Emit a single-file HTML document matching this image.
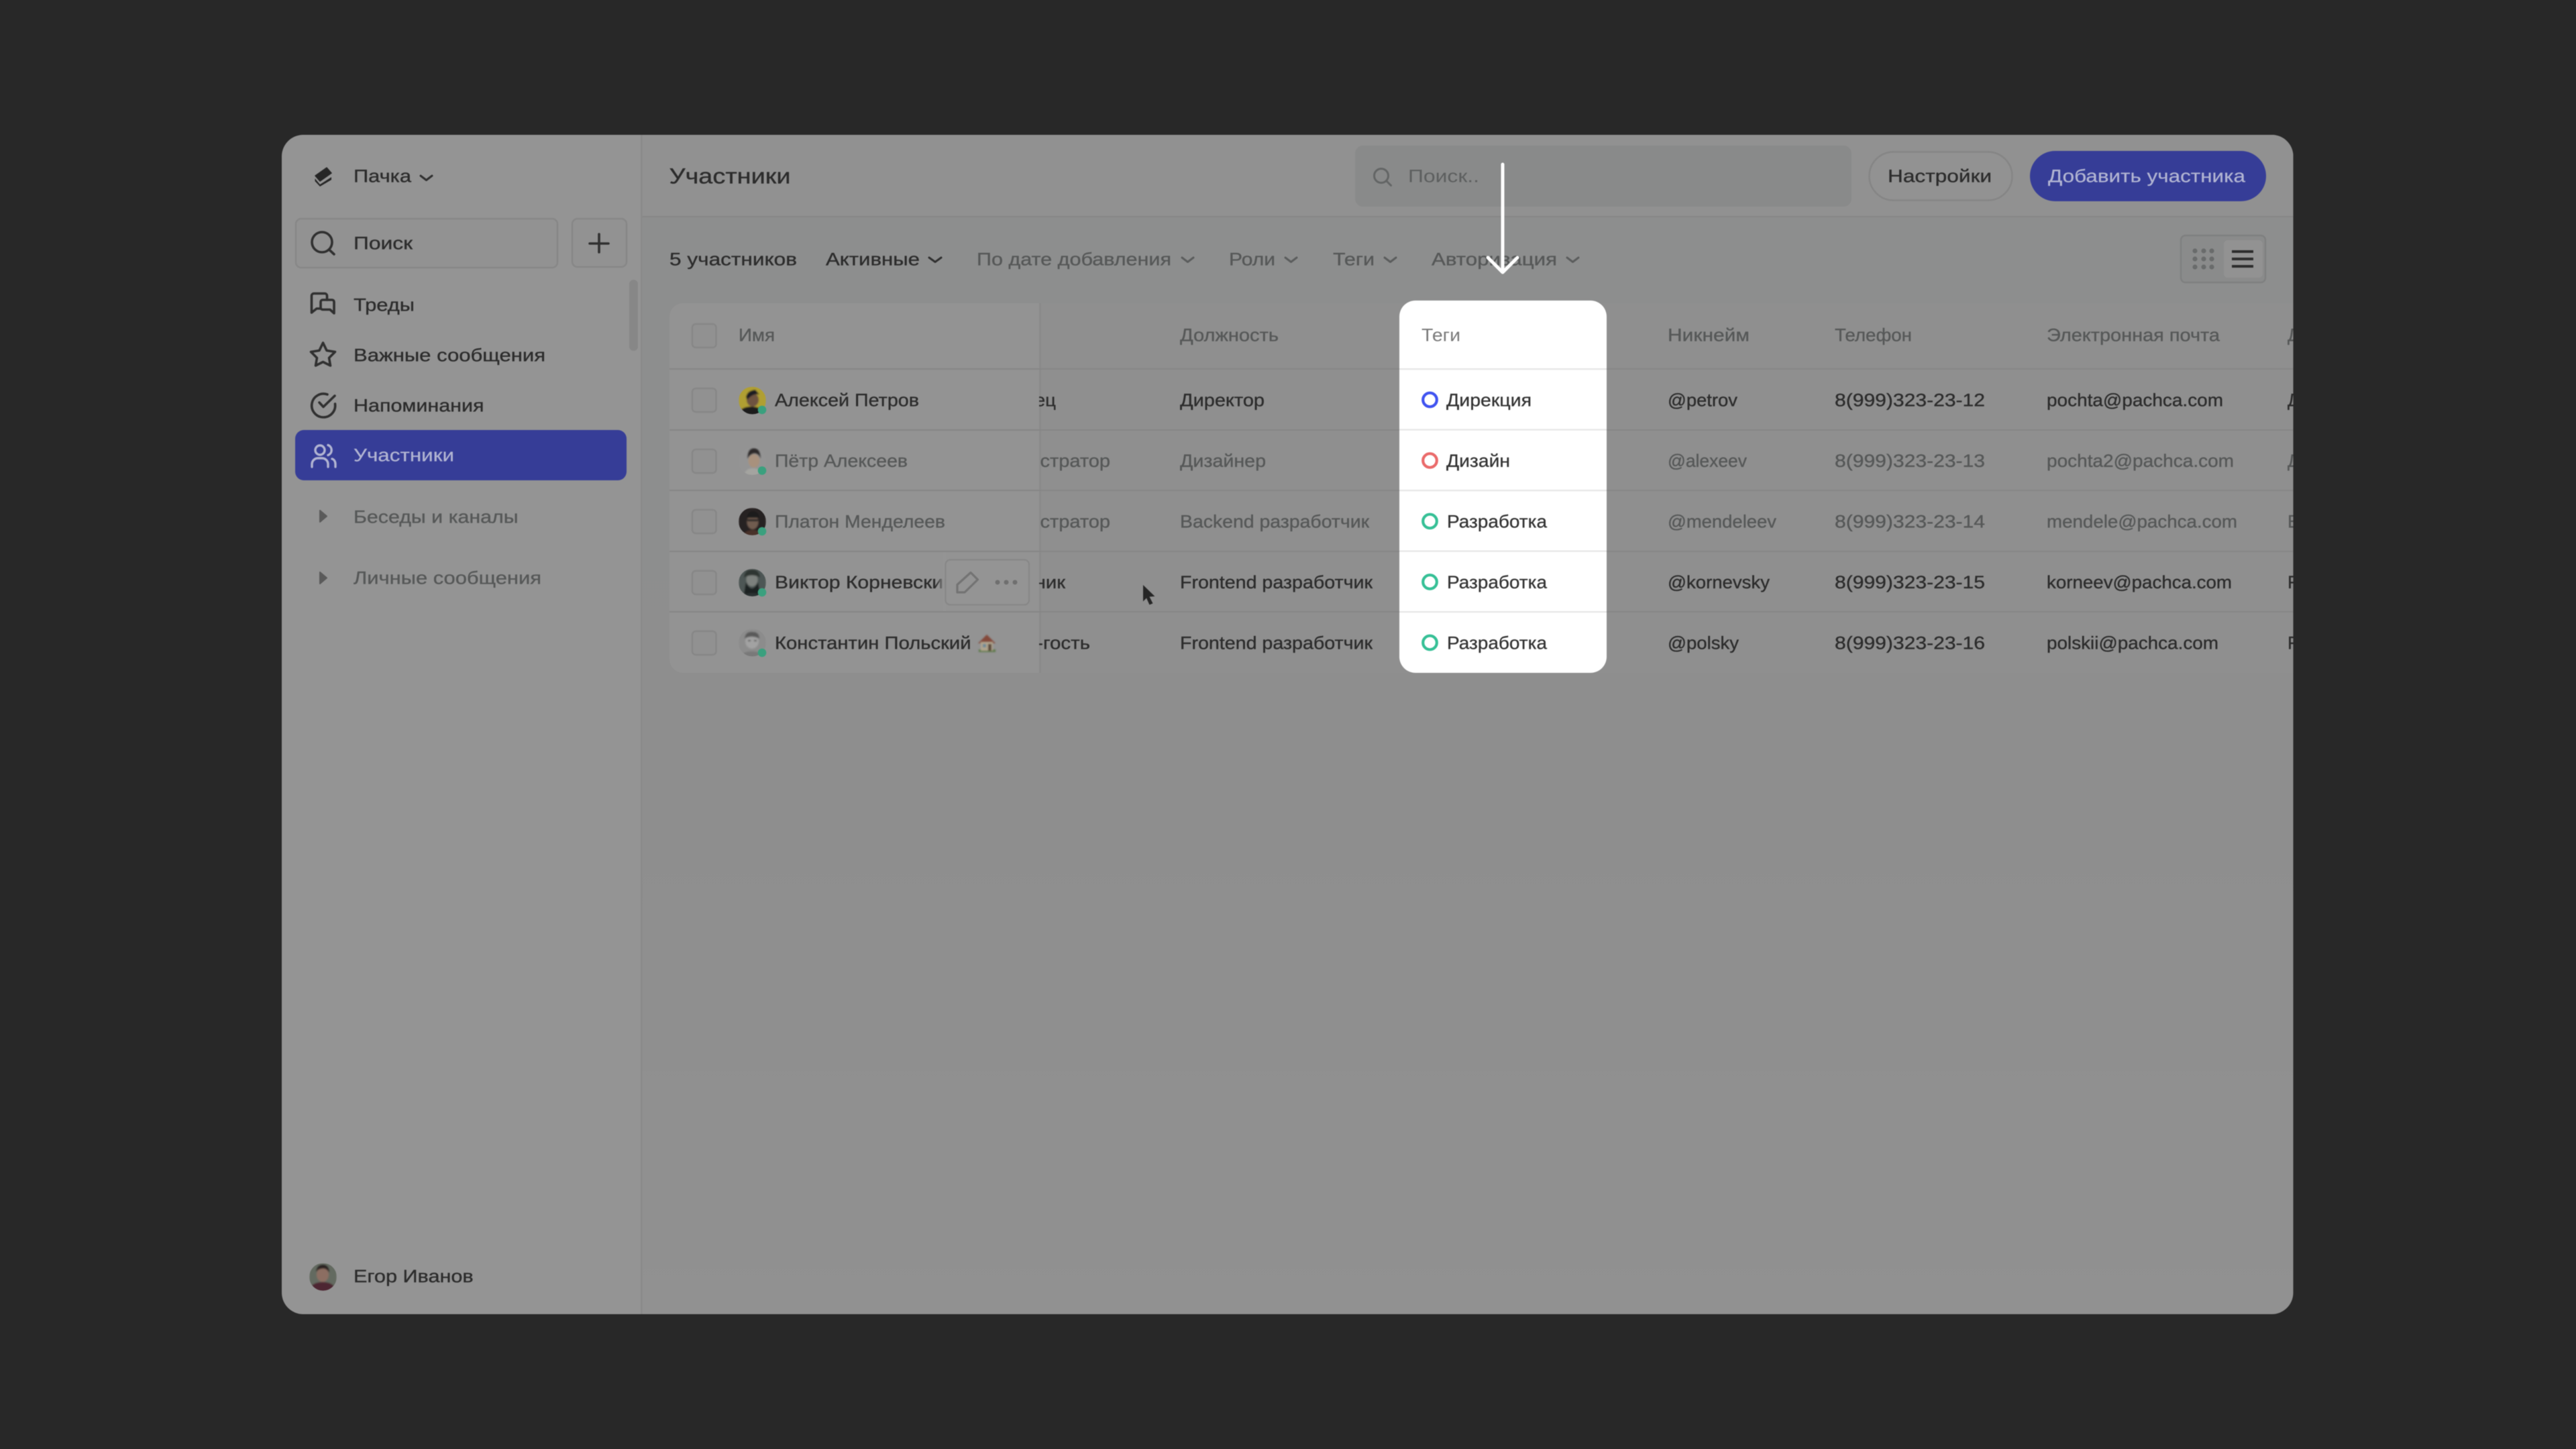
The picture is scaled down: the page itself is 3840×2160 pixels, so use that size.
<!DOCTYPE html>
<html lang="ru">
<head>
<meta charset="utf-8">
<title>Участники</title>
<style>
html,body{margin:0;padding:0;background:#282828;width:3840px;height:2160px;overflow:hidden}
svg{display:block;filter:blur(0.6px)}
text{font-family:"Liberation Sans","DejaVu Sans",sans-serif;font-size:26.5px;white-space:pre;transform:translate(-1px,-1px)}
.d{fill:#2c2c2c;stroke:#2c2c2c;stroke-width:.35px}
.g{fill:#565858;stroke:#565858;stroke-width:.35px}
.h{fill:#5d5f5f}
.a{fill:#b1b4d2;stroke:#b1b4d2;stroke-width:.25px}
.i{fill:none;stroke:#303030;stroke-width:3.6;stroke-linecap:round;stroke-linejoin:round}
.c{fill:none;stroke-width:3;stroke-linecap:round;stroke-linejoin:round}
.l{fill:#868686}
.k{fill:#919191;stroke:#878787;stroke-width:2.5}
.t{stroke:#333;stroke-width:.3px;fill:#333}
</style>
</head>
<body>
<svg xmlns="http://www.w3.org/2000/svg" width="3840" height="2160" viewBox="0 0 3840 2160">
<defs>
<clipPath id="frame"><rect x="420" y="201" width="2998.5" height="1758" rx="32"/></clipPath>
<clipPath id="rolecol"><rect x="1549" y="540" width="400" height="470"/></clipPath>
<clipPath id="card"><rect x="2086" y="448" width="309" height="555" rx="24"/></clipPath>
<clipPath id="av1"><circle cx="1121.5" cy="597" r="20.5"/></clipPath>
<clipPath id="av2"><circle cx="1121.5" cy="687.5" r="20.5"/></clipPath>
<clipPath id="av3"><circle cx="1121.5" cy="777.5" r="20.5"/></clipPath>
<clipPath id="av4"><circle cx="1121.5" cy="868.5" r="20.5"/></clipPath>
<clipPath id="av5"><circle cx="1121.5" cy="958" r="20.5"/></clipPath>
<clipPath id="av6"><circle cx="481.5" cy="1903.5" r="20.5"/></clipPath>
<linearGradient id="mainbg" x1="0" y1="0" x2="0" y2="1"><stop offset="0" stop-color="#8d8e8e"/><stop offset="0.5" stop-color="#8e8e8e"/><stop offset="1" stop-color="#919191"/></linearGradient>
<linearGradient id="fade" x1="0" y1="0" x2="1" y2="0"><stop offset="0" stop-color="#949494" stop-opacity="0"/><stop offset="1" stop-color="#949494"/></linearGradient>
<filter id="soft" x="-10%" y="-10%" width="120%" height="120%"><feGaussianBlur stdDeviation="1"/></filter>
</defs>

<rect width="3840" height="2160" fill="#282828"/>

<g clip-path="url(#frame)">
  <!-- backgrounds -->
  <rect x="420" y="201" width="536" height="1758" fill="#949494"/>
  <rect x="956" y="201" width="2463" height="1758" fill="url(#mainbg)"/>
  <rect x="956" y="201" width="2463" height="122" fill="#919191"/>
  <rect x="956" y="322" width="2463" height="2" fill="#868686"/>
  <rect x="955" y="201" width="2.5" height="1758" fill="#8a8a8a"/>

  <!-- table bg -->
  <rect x="1500" y="452" width="1919" height="551" fill="#8f8f8f"/>
  <rect x="998" y="452" width="551" height="551" rx="20" fill="#939393"/>
  <rect x="1530" y="452" width="19" height="551" fill="#939393"/>
  <rect x="1549" y="452" width="3" height="551" fill="#8a8a8a"/>

  <!-- table lines -->
  <rect x="998" y="549" width="2421" height="2" class="l"/>
  <rect x="998" y="640" width="2421" height="2" class="l"/>
  <rect x="998" y="730" width="2421" height="2" class="l"/>
  <rect x="998" y="821" width="2421" height="2" class="l"/>
  <rect x="998" y="911" width="2421" height="2" class="l"/>

  <!-- sidebar -->
  <path d="M470 262 L487 250 L494 258 L477 270 Z" fill="#262626" stroke="#262626" stroke-width="1.5" stroke-linejoin="round"/>
  <path d="M469.500 266 L477 275 L494 264 L494 268 L477 278 L469.500 270 Z" fill="#262626"/>
  <text x="528" y="272.500" class="d" textLength="86" lengthAdjust="spacingAndGlyphs">Пачка</text>
  <path d="M627 262 L635.500 268.500 L644 262" class="c" stroke="#303030"/>

  <rect x="441" y="326" width="390" height="73" rx="8" fill="#929292" stroke="#878787" stroke-width="2.5"/>
  <circle cx="480" cy="361" r="15" class="i"/>
  <path d="M490.500 372 L498 379" class="i"/>
  <text x="528" y="372.500" class="d" textLength="88" lengthAdjust="spacingAndGlyphs">Поиск</text>
  <rect x="853" y="326" width="81" height="72" rx="8" fill="#929292" stroke="#878787" stroke-width="2.5"/>
  <path d="M893 349 V376 M879 363 H907" class="i"/>
  <rect x="938" y="417" width="13" height="106" rx="6.500" fill="#878787"/>

  <path d="M464.500 466 V441 a3.500 3.500 0 0 1 3.500 -3.500 H484 a3.500 3.500 0 0 1 3.500 3.500 V447 M464.500 466 L472 460 H478" class="i"/>
  <path d="M498 467 L492 461.500 H481 a3 3 0 0 1 -3 -3 V450 a3 3 0 0 1 3 -3 H495 a3 3 0 0 1 3 3 Z" class="i"/>
  <text x="528" y="464.500" class="d" textLength="91" lengthAdjust="spacingAndGlyphs">Треды</text>

  <path d="M481.500 511 L487 522.500 L499.500 524.500 L490.500 533.500 L492.500 545 L481.500 539.500 L470.500 545 L472.500 533.500 L463.500 524.500 L476 522.500 Z" class="i"/>
  <text x="528" y="539.500" class="d" textLength="286" lengthAdjust="spacingAndGlyphs">Важные сообщения</text>

  <path d="M488 588 A17.500 17.500 0 1 0 499.500 602" class="i"/>
  <path d="M476 600 L482 606.500 L499 590" class="i"/>
  <text x="528" y="614.500" class="d" textLength="194.500" lengthAdjust="spacingAndGlyphs">Напоминания</text>

  <rect x="440" y="641" width="494" height="75" rx="13" fill="#363d97"/>
  <g fill="none" stroke="#b1b4d2" stroke-width="3.4" stroke-linecap="round" stroke-linejoin="round">
    <circle cx="477" cy="671" r="7"/>
    <path d="M489 663.500 A8 8 0 0 1 489 678.500"/>
    <path d="M465 696 V692 A9 9 0 0 1 474 683 H480 A9 9 0 0 1 489 692 V696"/>
    <path d="M495 684 A6 8 0 0 1 500 692 V696"/>
  </g>
  <text x="528" y="688.500" class="a" textLength="150" lengthAdjust="spacingAndGlyphs">Участники</text>

  <path d="M477 761 L487 769.500 L477 778 Z" fill="#5a5a5a" stroke="#5a5a5a" stroke-width="2" stroke-linejoin="round"/>
  <text x="528" y="780.500" class="g" textLength="245.600" lengthAdjust="spacingAndGlyphs">Беседы и каналы</text>
  <path d="M477 853 L487 861.500 L477 870 Z" fill="#5a5a5a" stroke="#5a5a5a" stroke-width="2" stroke-linejoin="round"/>
  <text x="528" y="871.500" class="g" textLength="280" lengthAdjust="spacingAndGlyphs">Личные сообщения</text>

  <g clip-path="url(#av6)">
    <g filter="url(#soft)">
    <rect x="461" y="1883" width="41" height="41" fill="#636b60"/>
    <ellipse cx="481" cy="1921" rx="18" ry="10" fill="#4e2630"/>
    <ellipse cx="481" cy="1900" rx="9" ry="11" fill="#8c6e62"/>
    <path d="M471 1896 Q472 1885 482 1885 Q491 1886 491 1897 Q486 1890 481 1891 Q475 1891 471 1896Z" fill="#2a2422"/>
    </g>
  </g>
  <text x="528" y="1912.500" class="d" textLength="178.700" lengthAdjust="spacingAndGlyphs">Егор Иванов</text>

  <!-- header -->
  <text x="998.500" y="274.500" class="d" style="font-size:32px" textLength="181" lengthAdjust="spacingAndGlyphs">Участники</text>
  <rect x="2020" y="217" width="740" height="91" rx="12" fill="#898a8a"/>
  <circle cx="2059" cy="262" r="10.500" fill="none" stroke="#636565" stroke-width="3"/>
  <path d="M2067 270 L2073.500 276.500" fill="none" stroke="#636565" stroke-width="3" stroke-linecap="round"/>
  <text x="2100" y="272.500" class="h" textLength="106" lengthAdjust="spacingAndGlyphs">Поиск..</text>

  <rect x="2786.500" y="226.500" width="213" height="72" rx="36" fill="#929292" stroke="#858585" stroke-width="2.500"/>
  <text x="2815" y="272.500" class="d" textLength="155" lengthAdjust="spacingAndGlyphs">Настройки</text>
  <rect x="3026" y="225" width="352" height="75" rx="37.500" fill="#363d97"/>
  <text x="3054" y="272.500" class="a" textLength="294" lengthAdjust="spacingAndGlyphs">Добавить участника</text>

  <!-- filter row -->
  <text x="999" y="396.500" class="d" textLength="190" lengthAdjust="spacingAndGlyphs">5 участников</text>
  <text x="1232" y="396.500" class="d" textLength="140" lengthAdjust="spacingAndGlyphs">Активные</text>
  <path d="M1385 384 L1394 390.500 L1403 384" class="c" stroke="#303030"/>
  <text x="1457" y="396.500" class="g" textLength="290" lengthAdjust="spacingAndGlyphs">По дате добавления</text>
  <path d="M1762 384 L1770.500 390.500 L1779 384" class="c" stroke="#5b5d5d"/>
  <text x="1833" y="396.500" class="g" textLength="69" lengthAdjust="spacingAndGlyphs">Роли</text>
  <path d="M1916 384 L1924.500 390.500 L1933 384" class="c" stroke="#5b5d5d"/>
  <text x="1988" y="396.500" class="g" textLength="62" lengthAdjust="spacingAndGlyphs">Теги</text>
  <path d="M2064 384 L2072.500 390.500 L2081 384" class="c" stroke="#5b5d5d"/>
  <text x="2135" y="396.500" class="g" textLength="187" lengthAdjust="spacingAndGlyphs">Авторизация</text>
  <path d="M2336 384 L2344.500 390.500 L2353 384" class="c" stroke="#5b5d5d"/>

  <!-- toggle -->
  <rect x="3251" y="351" width="126" height="70" rx="7" fill="#8a8b8b" stroke="#7f8080" stroke-width="2.500"/>
  <rect x="3315" y="358" width="58" height="56" rx="6" fill="#929292"/>
  <g fill="#696b6b">
    <circle cx="3272" cy="374" r="3.600"/><circle cx="3285" cy="374" r="3.600"/><circle cx="3297" cy="374" r="3.600"/>
    <circle cx="3272" cy="386" r="3.600"/><circle cx="3285" cy="386" r="3.600"/><circle cx="3297" cy="386" r="3.600"/>
    <circle cx="3272" cy="398" r="3.600"/><circle cx="3285" cy="398" r="3.600"/><circle cx="3297" cy="398" r="3.600"/>
  </g>
  <rect x="3327" y="373" width="32" height="4" fill="#2d2d2d"/>
  <rect x="3327" y="384" width="32" height="4" fill="#2d2d2d"/>
  <rect x="3327" y="395" width="32" height="4" fill="#2d2d2d"/>

  <!-- table header -->
  <rect x="1032" y="483" width="35.500" height="35" rx="5" class="k"/>
  <text x="1102" y="509.500" class="g" textLength="54" lengthAdjust="spacingAndGlyphs">Имя</text>
  <text x="1760" y="509.500" class="g" textLength="147" lengthAdjust="spacingAndGlyphs">Должность</text>
  <text x="2487" y="509.500" class="g" textLength="122" lengthAdjust="spacingAndGlyphs">Никнейм</text>
  <text x="2736" y="509.500" class="g" textLength="115" lengthAdjust="spacingAndGlyphs">Телефон</text>
  <text x="3052" y="509.500" class="g" textLength="258" lengthAdjust="spacingAndGlyphs">Электронная почта</text>
  <text x="3411" y="509.500" class="g">Департамент</text>

  <!-- checkboxes -->
  <rect x="1032" y="579" width="35.500" height="35" rx="5" class="k"/>
  <rect x="1032" y="670" width="35.500" height="35" rx="5" class="k"/>
  <rect x="1032" y="760" width="35.500" height="35" rx="5" class="k"/>
  <rect x="1032" y="851" width="35.500" height="35" rx="5" class="k"/>
  <rect x="1032" y="941" width="35.500" height="35" rx="5" class="k"/>

  <!-- avatars -->
  <g clip-path="url(#av1)"><g filter="url(#soft)">
    <rect x="1101" y="576" width="41" height="42" fill="#b09f33"/>
    <ellipse cx="1120" cy="616" rx="18" ry="10" fill="#1c1b1c"/>
    <ellipse cx="1122" cy="596" rx="9" ry="10" fill="#6e5240"/>
    <path d="M1112 592 Q1114 582 1126 581 L1132 588 Q1122 586 1114 596 Z" fill="#1f1d20"/>
  </g></g>
  <g clip-path="url(#av2)"><g filter="url(#soft)">
    <rect x="1101" y="667" width="41" height="42" fill="#949494"/>
    <path d="M1108 709 Q1112 698 1122 698 Q1134 698 1136 709 Z" fill="#a4a4a0"/>
    <ellipse cx="1124" cy="687" rx="8.500" ry="10" fill="#a8917d"/>
    <path d="M1114 684 Q1114 668 1124 668 Q1134 668 1134 684 Q1131 676 1124 676 Q1118 677 1114 684 Z" fill="#2e2b2a"/>
  </g></g>
  <g clip-path="url(#av3)"><g filter="url(#soft)">
    <rect x="1101" y="757" width="41" height="42" fill="#282321"/>
    <ellipse cx="1122" cy="778" rx="8.500" ry="11" fill="#6f5b50"/>
    <rect x="1114" y="774" width="16" height="3" fill="#222"/>
    <path d="M1113 772 Q1115 762 1123 762 Q1131 763 1132 772 Z" fill="#1e1b1a"/>
    <path d="M1106 799 Q1112 790 1122 790 Q1132 790 1138 799 Z" fill="#4a3029"/>
  </g></g>
  <g clip-path="url(#av4)"><g filter="url(#soft)">
    <rect x="1101" y="848" width="41" height="42" fill="#4e5654"/>
    <ellipse cx="1121" cy="864" rx="8.500" ry="10" fill="#7c807d"/>
    <path d="M1112 868 Q1121 886 1130 868 L1133 885 L1109 885 Z" fill="#1e2221"/>
    <path d="M1109 861 Q1110 849 1121 849 Q1132 849 1133 861 Q1121 854 1109 861 Z" fill="#2f3533"/>
    <ellipse cx="1121" cy="892" rx="19" ry="8" fill="#2c3231"/>
  </g></g>
  <g clip-path="url(#av5)"><g filter="url(#soft)">
    <rect x="1101" y="937" width="41" height="42" fill="#8c8c8c"/>
    <ellipse cx="1121" cy="956" rx="10" ry="11" fill="#a2a2a2"/>
    <path d="M1110 952 Q1111 941 1122 942 Q1132 942 1132 952 Q1120 946 1110 952 Z" fill="#5a5a5a"/>
    <rect x="1115" y="954" width="4" height="2" fill="#555"/><rect x="1124" y="954" width="4" height="2" fill="#555"/>
    <ellipse cx="1121" cy="980" rx="18" ry="9" fill="#797979"/>
  </g></g>
  <g fill="#3aa07e">
    <circle cx="1136" cy="611" r="6.300"/>
    <circle cx="1136" cy="701.500" r="6.300"/>
    <circle cx="1136" cy="792" r="6.300"/>
    <circle cx="1136" cy="883" r="6.300"/>
    <circle cx="1136" cy="973" r="6.300"/>
  </g>

  <!-- role col clipped -->
  <g clip-path="url(#rolecol)">
    <text x="1447" y="606.500" class="d" textLength="128" lengthAdjust="spacingAndGlyphs">Владелец</text>
    <text x="1447" y="697" class="g" textLength="209" lengthAdjust="spacingAndGlyphs">Администратор</text>
    <text x="1447" y="787.500" class="g" textLength="209" lengthAdjust="spacingAndGlyphs">Администратор</text>
    <text x="1447" y="878" class="d" textLength="142" lengthAdjust="spacingAndGlyphs">Сотрудник</text>
    <text x="1447" y="968.500" class="d" textLength="179" lengthAdjust="spacingAndGlyphs">Мульти-гость</text>
  </g>

  <!-- names -->
  <text x="1156" y="606.500" class="d" textLength="215" lengthAdjust="spacingAndGlyphs">Алексей Петров</text>
  <text x="1156" y="697" class="g" textLength="198" lengthAdjust="spacingAndGlyphs">Пётр Алексеев</text>
  <text x="1156" y="787.500" class="g" textLength="254" lengthAdjust="spacingAndGlyphs">Платон Менделеев</text>
  <text x="1156" y="878" class="d" textLength="268" lengthAdjust="spacingAndGlyphs">Виктор Корневский</text>
  <text x="1156" y="968.500" class="d" textLength="292.600" lengthAdjust="spacingAndGlyphs">Константин Польский</text>
  <!-- house emoji -->
  <g filter="url(#soft)">
  <rect x="1459" y="968" width="25" height="4" fill="#5f7a4c"/>
  <path d="M1458 959 L1471 946 L1484 959 Z" fill="#84483a"/>
  <rect x="1462" y="957" width="18" height="13" fill="#b0a48e"/>
  <rect x="1465" y="960" width="5" height="5" fill="#6d8a96"/>
  <rect x="1473" y="960" width="5" height="10" fill="#5c4a3a"/>
  </g>

  <!-- row actions -->
  <rect x="1394" y="823" width="16" height="88" fill="url(#fade)"/>
  <rect x="1409.500" y="834.500" width="124.500" height="67" rx="7" fill="#949494" stroke="#878787" stroke-width="2.200"/>
  <path d="M1427 883 V871.500 L1447 853.500 L1457.500 864 L1438 883 Z" fill="none" stroke="#737373" stroke-width="3.200" stroke-linejoin="round"/>
  <g fill="#6f6f6f"><circle cx="1487" cy="868" r="3.500"/><circle cx="1500" cy="868" r="3.500"/><circle cx="1513" cy="868" r="3.500"/></g>

  <!-- position -->
  <text x="1760" y="606.500" class="d" textLength="126" lengthAdjust="spacingAndGlyphs">Директор</text>
  <text x="1760" y="697" class="g" textLength="128" lengthAdjust="spacingAndGlyphs">Дизайнер</text>
  <text x="1760" y="787.500" class="g" textLength="282" lengthAdjust="spacingAndGlyphs">Backend разработчик</text>
  <text x="1760" y="878" class="d" textLength="287" lengthAdjust="spacingAndGlyphs">Frontend разработчик</text>
  <text x="1760" y="968.500" class="d" textLength="287" lengthAdjust="spacingAndGlyphs">Frontend разработчик</text>

  <!-- nick -->
  <text x="2487" y="606.500" class="d" textLength="104" lengthAdjust="spacingAndGlyphs">@petrov</text>
  <text x="2487" y="697" class="g" textLength="118" lengthAdjust="spacingAndGlyphs">@alexeev</text>
  <text x="2487" y="787.500" class="g" textLength="162" lengthAdjust="spacingAndGlyphs">@mendeleev</text>
  <text x="2487" y="878" class="d" textLength="152" lengthAdjust="spacingAndGlyphs">@kornevsky</text>
  <text x="2487" y="968.500" class="d" textLength="106" lengthAdjust="spacingAndGlyphs">@polsky</text>

  <!-- phone -->
  <text x="2736" y="606.500" class="d" textLength="224" lengthAdjust="spacingAndGlyphs">8(999)323-23-12</text>
  <text x="2736" y="697" class="g" textLength="224" lengthAdjust="spacingAndGlyphs">8(999)323-23-13</text>
  <text x="2736" y="787.500" class="g" textLength="224" lengthAdjust="spacingAndGlyphs">8(999)323-23-14</text>
  <text x="2736" y="878" class="d" textLength="224" lengthAdjust="spacingAndGlyphs">8(999)323-23-15</text>
  <text x="2736" y="968.500" class="d" textLength="224" lengthAdjust="spacingAndGlyphs">8(999)323-23-16</text>

  <!-- email -->
  <text x="3052" y="606.500" class="d" textLength="263" lengthAdjust="spacingAndGlyphs">pochta@pachca.com</text>
  <text x="3052" y="697" class="g" textLength="279" lengthAdjust="spacingAndGlyphs">pochta2@pachca.com</text>
  <text x="3052" y="787.500" class="g" textLength="284" lengthAdjust="spacingAndGlyphs">mendele@pachca.com</text>
  <text x="3052" y="878" class="d" textLength="276" lengthAdjust="spacingAndGlyphs">korneev@pachca.com</text>
  <text x="3052" y="968.500" class="d" textLength="256" lengthAdjust="spacingAndGlyphs">polskii@pachca.com</text>

  <!-- department clipped -->
  <text x="3411" y="606.500" class="d">Дирекция</text>
  <text x="3411" y="697" class="g">Дизайн</text>
  <text x="3411" y="787.500" class="g">Backend</text>
  <text x="3411" y="878" class="d">Frontend</text>
  <text x="3411" y="968.500" class="d">Frontend</text>

  <!-- cursor -->
  <path d="M1704 872 L1721.500 889 L1713.500 889.500 L1718.500 899.500 L1713.500 901.500 L1709 891.500 L1704 896.500 Z" fill="#262626"/>
</g>

<!-- highlighted card -->
<rect x="2086" y="448" width="309" height="555" rx="24" fill="#ffffff"/>
<g clip-path="url(#card)">
  <rect x="2086" y="549" width="309" height="2.200" fill="#e6e6e6"/>
  <rect x="2086" y="639.500" width="309" height="2.200" fill="#e6e6e6"/>
  <rect x="2086" y="730" width="309" height="2.200" fill="#e6e6e6"/>
  <rect x="2086" y="820.500" width="309" height="2.200" fill="#e6e6e6"/>
  <rect x="2086" y="911" width="309" height="2.200" fill="#e6e6e6"/>
</g>
<text x="2120" y="509.500" fill="#7a7a7a" textLength="58" lengthAdjust="spacingAndGlyphs">Теги</text>
<g fill="none" stroke-width="4.200">
  <circle cx="2131.500" cy="596" r="10.300" stroke="#4053f0"/>
  <circle cx="2131.500" cy="686.500" r="10.300" stroke="#ea6a6a"/>
  <circle cx="2131.500" cy="777" r="10.300" stroke="#36c096"/>
  <circle cx="2131.500" cy="867.500" r="10.300" stroke="#36c096"/>
  <circle cx="2131.500" cy="958" r="10.300" stroke="#36c096"/>
</g>
<text x="2157" y="606.500" class="t" textLength="127" lengthAdjust="spacingAndGlyphs">Дирекция</text>
<text x="2157" y="697" class="t" textLength="95" lengthAdjust="spacingAndGlyphs">Дизайн</text>
<text x="2158" y="787.500" class="t" textLength="149" lengthAdjust="spacingAndGlyphs">Разработка</text>
<text x="2158" y="878" class="t" textLength="149" lengthAdjust="spacingAndGlyphs">Разработка</text>
<text x="2158" y="968.500" class="t" textLength="149" lengthAdjust="spacingAndGlyphs">Разработка</text>

<!-- arrow -->
<path d="M2240 245 V405 M2218 384 L2240 406 L2262 384" fill="none" stroke="#ffffff" stroke-width="5" stroke-linecap="round" stroke-linejoin="round"/>
</svg>
</body>
</html>
